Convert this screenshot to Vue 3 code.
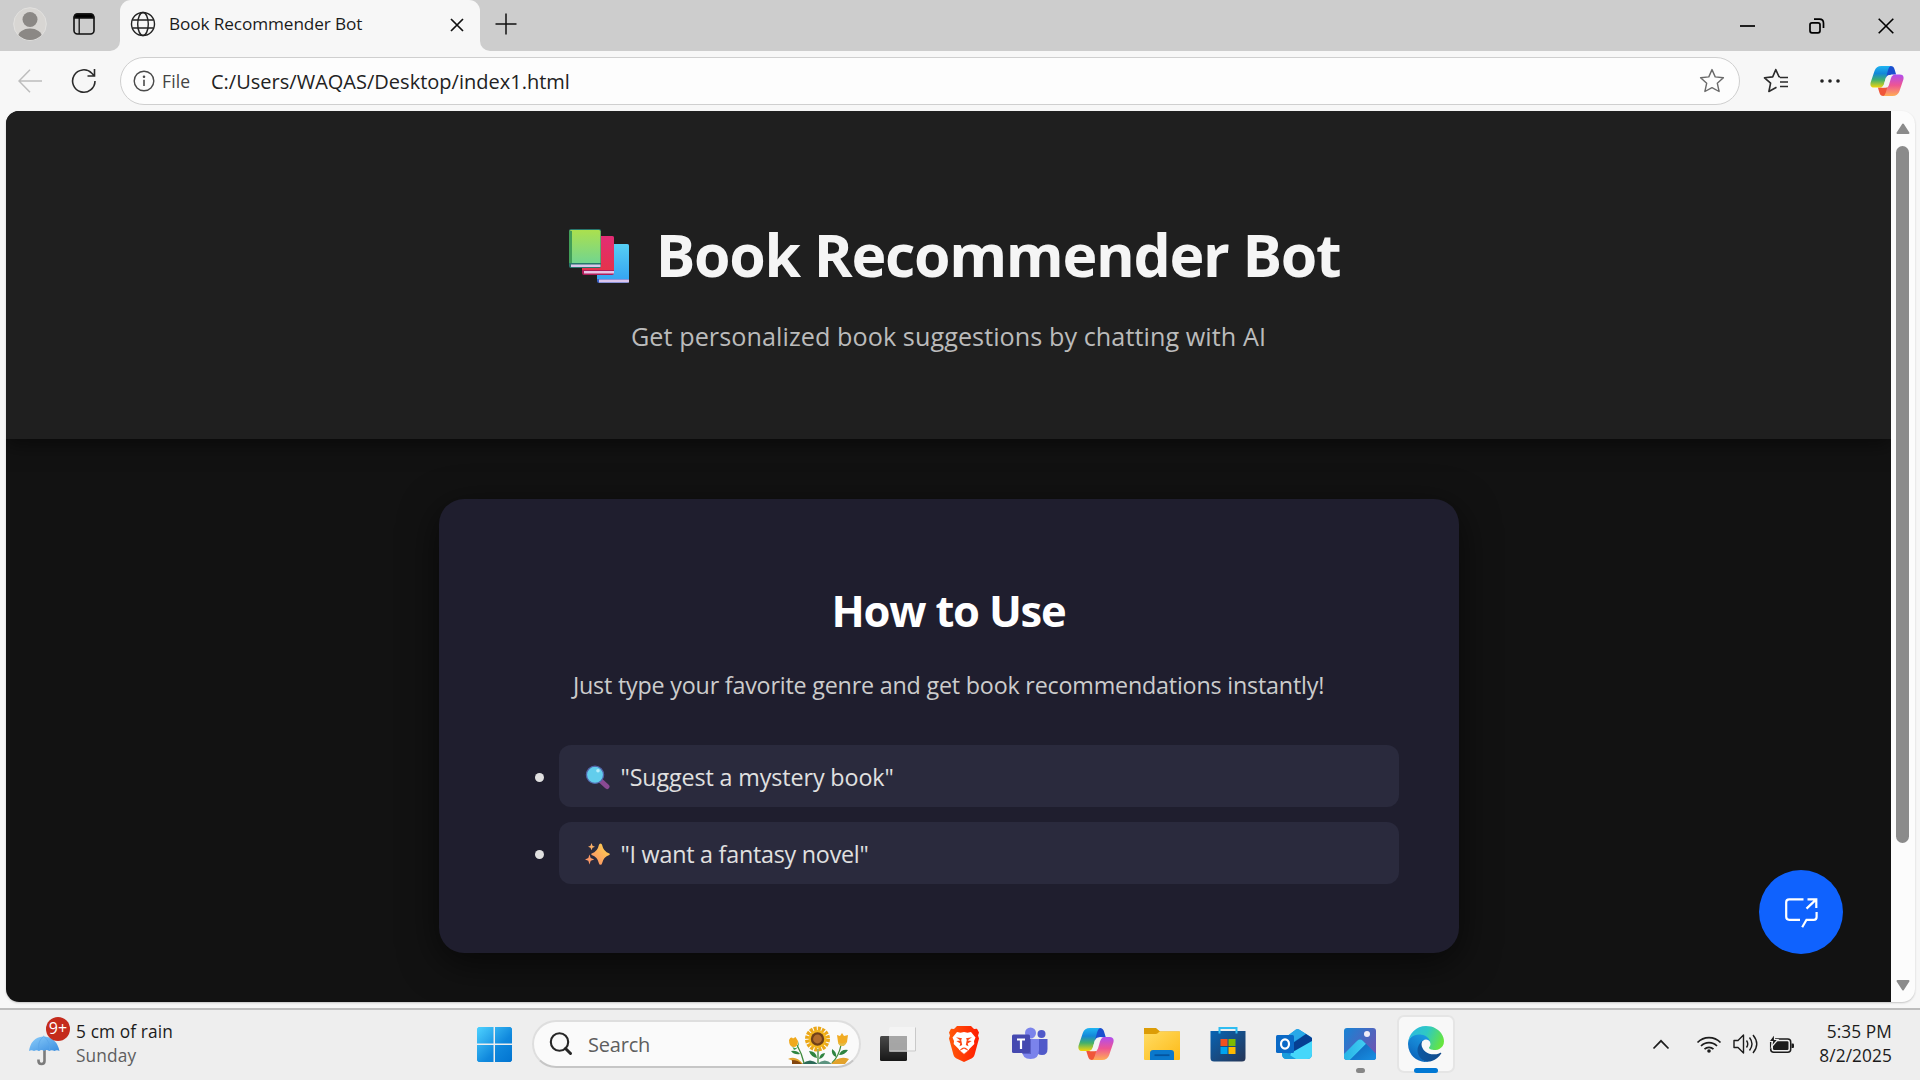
<script setup>
const examples = [
  { icon: 'search', text: '"Suggest a mystery book"' },
  { icon: 'sparkle', text: '"I want a fantasy novel"' },
]
</script>

<template>
  <div class="screen">
    <svg class="defs" width="0" height="0" aria-hidden="true">
      <defs>
        <linearGradient id="cpA" x1="0" y1="0" x2="0" y2="1"><stop offset="0" stop-color="#1fb5f2" /><stop offset=".35" stop-color="#1387d8" /><stop offset=".65" stop-color="#43b06c" /><stop offset="1" stop-color="#f5d60a" /></linearGradient>
        <linearGradient id="cpB" x1="0" y1="1" x2="0" y2="0"><stop offset="0" stop-color="#b04df0" /><stop offset=".5" stop-color="#ee5593" /><stop offset="1" stop-color="#ffae55" /></linearGradient>
        <symbol id="copilot" viewBox="0 0 36 34">
          <path d="M17 1h5q3 0 4 3.500l1.700 5.500h-5q-2.500 0-3.300 3L17 20z" fill="#1a4fcf" />
          <path d="M19 33h-5q-3 0-4-3.500L8.300 24h5q2.500 0 3.300-3L19 14z" fill="#f0563a" />
          <path d="M12 1h10q-2 .8-2.800 4L15 20q-1 4-5 4H4.500Q-.6 24 .6 18.500L4.800 6Q6.500 1 12 1z" fill="url(#cpA)" />
          <path d="M12 1h10q-2 .8-2.800 4L15 20q-1 4-5 4H4.500Q-.6 24 .6 18.500L4.800 6Q6.500 1 12 1z" fill="url(#cpB)" transform="rotate(180 18 17)" />
          <path d="M19.800 10.500h5q-2 .8-2.800 4l-2 7q-.8 2.800-3.500 2.800h-5q2.300-.6 3.200-3.600l2.200-7.200q.8-2.500 2.900-3z" fill="#f3f3f3" />
        </symbol>
      </defs>
    </svg>

    <header class="titlebar">
      <div class="left-tools">
        <svg width="34" height="34" viewBox="0 0 34 34"><defs><clipPath id="av"><circle cx="17" cy="17" r="16" /></clipPath></defs><circle cx="17" cy="17" r="16.300" fill="#d8d6d3" stroke="#e2e1df" /><g clip-path="url(#av)" fill="#8b8885"><circle cx="17" cy="12.500" r="7.500" /><ellipse cx="17" cy="30" rx="12" ry="8.500" /></g></svg>
        <svg width="22" height="22" viewBox="0 0 22 22" fill="none" stroke="#111" stroke-width="1.600"><rect x="1" y="1" width="20" height="20" rx="3.500" /><path d="M1.500 5V4Q1.500 1 4.500 1h13q3 0 3 3v1z" fill="#000" /><path d="M6.200 5v16" stroke-width="1.300" /></svg>
      </div>
      <div class="tab">
        <svg width="26" height="26" viewBox="0 0 26 26" fill="none" stroke="#222" stroke-width="1.400"><circle cx="13" cy="13" r="11.500" /><ellipse cx="13" cy="13" rx="5.300" ry="11.500" /><path d="M2.500 9h21M2.500 17h21" /></svg>
        <span class="tab-title">Book Recommender Bot</span>
        <svg class="tab-close" width="14" height="14" viewBox="0 0 14 14" stroke="#111" stroke-width="1.700"><path d="M1 1l12 12M13 1L1 13" /></svg>
      </div>
      <div class="strip">
        <svg class="plus" width="22" height="22" viewBox="0 0 22 22" stroke="#111" stroke-width="1.500"><path d="M11 .5v21M.5 11h21" /></svg>
        <div class="window-buttons">
          <svg width="16" height="16" viewBox="0 0 16 16" stroke="#000" stroke-width="1.700"><path d="M0 8h15" /></svg>
          <svg width="16" height="16" viewBox="0 0 16 16" fill="none" stroke="#000" stroke-width="1.700"><rect x="1" y="4.800" width="10" height="10" rx="2" /><path d="M5 1.200h5.500q4 0 4 4V10" /></svg>
          <svg width="16" height="16" viewBox="0 0 16 16" stroke="#000" stroke-width="1.600"><path d="M.7.7l14.600 14.600M15.300.7L.7 15.300" /></svg>
        </div>
      </div>
    </header>

    <div class="toolbar">
      <svg class="back" width="24" height="24" viewBox="0 0 24 24" fill="none" stroke="#bdbdbd" stroke-width="1.500"><path d="M12 .8L1 12l11 11.200M1 12h23" /></svg>
      <svg class="reload" width="26" height="26" viewBox="0 0 26 26" fill="none" stroke="#2b2b2b" stroke-width="1.600"><path d="M24 13a11.200 11.200 0 1 1-3.200-7.800L23.500 8M23.500 1v7h-7" /></svg>
      <div class="address">
        <svg width="22" height="22" viewBox="0 0 22 22" fill="none" stroke="#4a4a4a" stroke-width="1.400"><circle cx="11" cy="11" r="9.800" /><path d="M11 9.800V16" stroke-width="1.600" /><circle cx="11" cy="6.800" r=".6" fill="#4a4a4a" /></svg>
        <span class="scheme">File</span>
        <span class="url">C:/Users/WAQAS/Desktop/index1.html</span>
        <svg class="star" width="26" height="26" viewBox="0 0 26 26" fill="none" stroke="#6a6a6a" stroke-width="1.400" stroke-linejoin="round"><path d="M13 1.600l3.200 7.300 8.200.9-6.100 5.400 1.800 8.300L13 19.600l-7.100 3.900 1.800-8.300L1.600 9.800l8.200-.9z" /></svg>
      </div>
      <div class="tools-right">
        <svg width="26" height="26" viewBox="0 0 26 26" fill="none" stroke="#2b2b2b" stroke-width="1.600" stroke-linejoin="round"><path d="M17 8.900l-1-.1L12.800 1.600 9.700 8.900l-8.200.9 6.100 5.400-1.700 8.300 7.600-4.200M17 9.500h8M17 14h8M17 18.500h8" /></svg>
        <svg width="20" height="6" viewBox="0 0 20 6" fill="#222"><circle cx="2" cy="3" r="1.800" /><circle cx="10" cy="3" r="1.800" /><circle cx="18" cy="3" r="1.800" /></svg>
        <svg width="34" height="32"><use href="#copilot" /></svg>
      </div>
    </div>

    <div class="viewport">
      <main class="page">
        <section class="hero">
          <h1>
            <svg class="books" width="62" height="58" viewBox="0 0 62 58"><defs><linearGradient id="bg1" x1="0" y1="0" x2="0" y2="1"><stop offset="0" stop-color="#abe04e" /><stop offset="1" stop-color="#72d58f" /></linearGradient><linearGradient id="bg2" x1="0" y1="0" x2="0" y2="1"><stop offset="0" stop-color="#e22c75" /><stop offset="1" stop-color="#e5334b" /></linearGradient><linearGradient id="bg3" x1="0" y1="0" x2="0" y2="1"><stop offset="0" stop-color="#56cff4" /><stop offset="1" stop-color="#36a5f2" /></linearGradient></defs>
              <rect x="29" y="17" width="32" height="39" rx="2" fill="#3b62c8" /><path d="M33 17h26q2 0 2 2v33H29V19q0-2 4-2z" fill="url(#bg3)" /><path d="M31 52.500h30v3H31z" fill="#dcc6ec" />
              <rect x="14" y="9" width="32" height="39" rx="2" fill="#b01c59" /><path d="M18 9h26q2 0 2 2v32H14V11q0-2 4-2z" fill="url(#bg2)" /><path d="M16 44h30v2.500H16z" fill="#e8c3e4" />
              <rect x="1" y="2" width="32" height="39" rx="2" fill="#28766d" /><path d="M4 3h27q1.500 0 1.500 1.500V36H1V5q0-2 3-2z" fill="url(#bg1)" /><path d="M1 4h3v32H1z" fill="#419e58" /><path d="M3 37.500h29.500v2.500H3z" fill="#dcc6ec" /></svg>
            <span>Book Recommender Bot</span>
          </h1>
          <p>Get personalized book suggestions by chatting with AI</p>
        </section>

        <section class="card">
          <h2>How to Use</h2>
          <p>Just type your favorite genre and get book recommendations instantly!</p>
          <ul>
            <li v-for="e in examples" :key="e.icon" :class="e.icon">
              <svg v-if="e.icon === 'search'" width="25" height="25" viewBox="0 0 25 25"><path d="M16 16l6 5.500" stroke="#8a4a93" stroke-width="5" stroke-linecap="round" /><circle cx="10" cy="9.800" r="8.600" fill="#62cdec" stroke="#5263a8" stroke-width="1.300" /><circle cx="13" cy="5.800" r="1.800" fill="#b5edfb" /></svg>
              <svg v-else width="25" height="25" viewBox="0 0 25 25"><defs><linearGradient id="sp" x1="1" y1="0" x2="0" y2="1"><stop offset="0" stop-color="#ffd94a" /><stop offset="1" stop-color="#f9886c" /></linearGradient></defs><path d="M15.500 1.500q1.300 0 1.600 1.600 1.300 6.500 7.200 8.400 1 .7 0 1.400-5.900 1.900-7.200 8.300-.3 1.600-1.600 1.600t-1.600-1.600Q12.600 14.800 6.700 12.900q-1-.7 0-1.400 5.900-1.900 7.200-8.400.3-1.600 1.600-1.600z" fill="url(#sp)" /><path d="M6.500 1l1 2.700 2.500 1-2.500 1-1 2.600-1-2.600-2.500-1 2.500-1z" fill="#fbb067" /><path d="M4.500 12.500l1.200 3.600 3.500 1.400-3.500 1.300-1.200 3.700-1.200-3.700L0 17.500l3.300-1.400z" fill="#fa9868" /></svg>
              <span>{{ e.text }}</span>
            </li>
          </ul>
        </section>

        <button class="fab" aria-label="Open chat">
          <svg width="84" height="84" viewBox="0 0 84 84" fill="none" stroke="#fff" stroke-width="2.200"><path d="M44.500 29.300H30.200q-3 0-3 3v14.500q0 3 3 3H41M43.200 57.200l4.300-7.400h7.300q2.800 0 2.800-2.800v-5M48.500 29.300h8.800V38M57 29.600l-9.500 9" /></svg>
        </button>
      </main>
      <aside class="scrollbar">
        <svg width="16" height="12" viewBox="0 0 16 12"><path d="M8 1.500l5.500 8.500h-11z" fill="#8b8b8b" stroke="#8b8b8b" stroke-width="2" stroke-linejoin="round" /></svg>
        <i></i>
        <svg width="16" height="12" viewBox="0 0 16 12"><path d="M8 10.500L2.500 2h11z" fill="#8b8b8b" stroke="#8b8b8b" stroke-width="2" stroke-linejoin="round" /></svg>
      </aside>
    </div>

    <footer class="taskbar">
      <div class="weather">
        <svg width="42" height="46" viewBox="0 0 42 46"><defs><linearGradient id="um" x1="0" y1="0" x2="1" y2="1"><stop offset="0" stop-color="#8fd0fb" /><stop offset="1" stop-color="#3a8de0" /></linearGradient></defs><path d="M15.500 29v11q0 3-3 3t-3-3v-1.500" fill="none" stroke="#7b7b7b" stroke-width="2.600" /><path d="M14 15.500q.8-2 1.500 0 12 1 15 14.500-2.500-1.500-5 0-2.800-1.500-5.300 0-2.700-2-5.200 0-2.500-2-5 0-2.500-1.500-5 0-2.500-1.500-5 0Q2 16.500 14 15.500z" fill="url(#um)" /><path d="M14 16q-6 5-4 14M15.500 16q6 5 5 14" fill="none" stroke="#5aa6e9" stroke-width=".8" /></svg>
        <b class="badge">9+</b>
        <div class="two-lines"><div>5 cm of rain</div><div class="muted">Sunday</div></div>
      </div>

      <div class="dock">
        <svg class="start" width="35" height="35" viewBox="0 0 35 35"><defs><linearGradient id="wn" gradientUnits="userSpaceOnUse" x1="0" y1="0" x2="35" y2="35"><stop offset="0" stop-color="#4ed2ff" /><stop offset=".6" stop-color="#1088dd" /><stop offset="1" stop-color="#0274d0" /></linearGradient></defs><path d="M1.500 0h15v16.500H0V1.500zM18 0h15.500L35 1.500v15H18zM0 18h16.500v17h-15L0 33.500zM18 18h17v15.500L33.500 35H18z" fill="url(#wn)" /></svg>
        <div class="search-box">
          <svg width="24" height="24" viewBox="0 0 24 24" fill="none" stroke="#262626"><circle cx="10.500" cy="10" r="8.700" stroke-width="2.100" /><path d="M16.500 16.500l5 5" stroke-width="3" stroke-linecap="round" /></svg>
          <span class="search-text">Search</span>
          <svg class="flowers" width="64" height="40" viewBox="0 0 64 40">
            <g fill="none" stroke="#3f8a3c" stroke-width="1.300"><path d="M10 20q5 9 7 18M31 24v14M54 20q-2 11-9 18" /></g>
            <g fill="#2f8440"><path d="M4 26q6-1 9 3-6 1-9-3zM22 26q7 0 8 7-6-1-8-7zM38 28q-5 0-6 6 5-1 6-6zM45 24q-1 6 4 8 1-5-4-8zM61 25q-7-1-9 5 6 0 9-5z" /></g>
            <path d="M1 34q8-4 15 5H8q-2-4-7-5zM62 34q-10-4-18 5h14z" fill="#e2a22c" /><path d="M5 35q6 0 10 4H5z" fill="#84470f" /><path d="M15 39q8-7 16 0z" fill="#2c6a57" /><path d="M30 39q8-7 15 0z" fill="#5c9480" />
            <path d="M2 15q2-4 4-1.500l2.500-1.500 2.500 4q0 6-4.500 6T2 15z" fill="#efa91e" /><path d="M5 21q2 3 5 1.500l2-6.500q0 8-5 9z" fill="#3f9e51" />
            <path d="M50 10l3 1 2-3 2 3 4-1-1 7q-2 4-5 4t-4-4z" fill="#f1ac24" /><path d="M51 17q4 3 8 0-.5 4-4 4t-4-4z" fill="#e2bd49" />
            <circle cx="30.500" cy="14" r="10" fill="none" stroke="#eba718" stroke-width="5" stroke-dasharray="2.900 1.030" /><circle cx="30.500" cy="14" r="9" fill="#f4b71e" /><circle cx="30.500" cy="14" r="6.700" fill="#70401a" /><circle cx="30.500" cy="14" r="4.400" fill="#b26d2d" />
          </svg>
        </div>

        <div class="apps">
          <div class="app"><svg width="36" height="36" viewBox="0 0 36 36"><defs><linearGradient id="tv" x1="0" y1="0" x2="0" y2="1"><stop offset="0" stop-color="#494949" /><stop offset="1" stop-color="#171717" /></linearGradient></defs><rect x="0" y="10" width="27" height="25" rx="1.500" fill="url(#tv)" /><rect x="9" y="1" width="27" height="24.500" rx="1.500" fill="#f5f5f5" opacity=".85" /><path d="M9 10h18v15.500H9z" fill="#999" opacity=".8" /><path d="M9.500 25h26V1.500" fill="none" stroke="#c9c9c9" /></svg></div>
          <div class="app"><svg width="30" height="36" viewBox="0 0 30 36"><defs><linearGradient id="br"><stop offset="0" stop-color="#ff5a0a" /><stop offset="1" stop-color="#ff1b00" /></linearGradient></defs><path d="M8 0h14l3 3 3-.3 2 3.800-1 3 1 3-4.500 16.500q-.5 2-2.500 3.300L15 36l-8-3.700Q5 31 4.500 29L0 12.500l1-3-1-3 2-3.800L5 3z" fill="url(#br)" /><path d="M8 6l3.500.7L15 6l3.500.7L22 6l4.500 5.500L25 15l.3 3-5 5-.8 1.500-2.500-2.500-2-.5-2 .5-2.500 2.500-.8-1.500-5-5L5 15l-1.500-3.500z" fill="#fff" /><path d="M7 11.300l6 .9-.8 1.800 1 5-2.700 1.200.8-2.700-4-2.500 4.200-.4zM23 11.300l-6 .9.800 1.800-1 5 2.700 1.200-.8-2.700 4-2.500-4.200-.4z" fill="#fb4513" /><path d="M15 22.300l4.500 2.200L15 28.300l-4.500-3.800z" fill="#fff" stroke="#fb4513" stroke-width=".6" /></svg></div>
          <div class="app"><svg width="36" height="34" viewBox="0 0 36 34"><circle cx="18.500" cy="6" r="5.500" fill="#7b83eb" /><circle cx="29.500" cy="7" r="4" fill="#5059c9" /><path d="M24 12h11.500v10q0 6-5.500 6t-6-6z" fill="#5059c9" /><path d="M10 12h17v11q0 9-8.500 9T10 23z" fill="#7b83eb" /><path d="M10 12h9v15h-8.500z" fill="#5a60c7" /><rect y="7.500" width="18" height="18.500" rx="1.500" fill="#4549b0" /><path d="M5 12.500h8M9 12.500v9.500" stroke="#fff" stroke-width="2.200" /></svg></div>
          <div class="app"><svg width="36" height="34"><use href="#copilot" /></svg></div>
          <div class="app"><svg width="36" height="34" viewBox="0 0 36 34"><defs><linearGradient id="fo" x1="0" y1="0" x2="1" y2="1"><stop offset="0" stop-color="#ffdc63" /><stop offset="1" stop-color="#fdba17" /></linearGradient></defs><path d="M0 1h12l4 3.500h19.500q.5 0 .5 1V10H0z" fill="#dc9c06" /><path d="M0 7h11.500q1.500 0 3-1.500l1.500-1h19.500q.5 0 .5 1V32q0 1-1 1H1q-1 0-1-1z" fill="url(#fo)" /><path d="M6 33V26q0-3 3-3h18q3 0 3 3v7z" fill="#0a78cc" /><path d="M10.500 28.200h15" stroke="#04549e" stroke-width="1.800" /></svg></div>
          <div class="app"><svg width="36" height="36" viewBox="0 0 36 36"><defs><linearGradient id="st" x1="0" y1="0" x2="1" y2="1"><stop offset="0" stop-color="#0764b4" /><stop offset="1" stop-color="#263556" /></linearGradient></defs><path d="M.5 5h35v27q0 3.500-3.500 3.500H4Q.5 35.500.5 32z" fill="url(#st)" /><path d="M9.500 7.500V2h17v5.500" fill="none" stroke="#2fbdf1" stroke-width="2" /><path d="M10.500 13h7v7h-7z" fill="#f25022" /><path d="M18.500 13h7v7h-7z" fill="#7fba00" /><path d="M10.500 21h7v7h-7z" fill="#00a4ef" /><path d="M18.500 21h7v7h-7z" fill="#ffb900" /></svg></div>
          <div class="app"><svg width="36" height="32" viewBox="0 0 36 32"><path d="M6 12L20 1.500q1.500-.8 3 0L35 9q1 1 1 2v15q0 5-5 5H11q-5 0-5-5z" fill="#1490df" /><path d="M6 12L20 1.500q1.500-.8 3 0L30 6 14 16z" fill="#28a8e8" /><path d="M14 17l16-11 6 4v5L20 25z" fill="#063f92" /><path d="M15 25l21-12v13q0 5-5 5H13z" fill="#45d7fa" /><path d="M6 22l14 9h-9q-5 0-5-5z" fill="#189ddc" /><rect y="7" width="18" height="18" rx="1.500" fill="#0a69c6" /><ellipse cx="9" cy="16" rx="4" ry="4.600" fill="none" stroke="#fff" stroke-width="2.200" /></svg></div>
          <div class="app"><svg width="32" height="32" viewBox="0 0 32 32"><defs><linearGradient id="ph" x1="0" y1="0" x2="1" y2=".7"><stop offset="0" stop-color="#1684d5" /><stop offset="1" stop-color="#6c55b3" /></linearGradient><linearGradient id="pm"><stop offset="0" stop-color="#27b4e6" /><stop offset="1" stop-color="#41cdf2" /></linearGradient><linearGradient id="pr" x1="0" y1="0" x2="1" y2="1"><stop offset="0" stop-color="#0f63b8" /><stop offset="1" stop-color="#188fe2" /></linearGradient><clipPath id="pc"><rect width="32" height="32" rx="3" /></clipPath></defs><g clip-path="url(#pc)"><path d="M0 0h32v32H0z" fill="url(#ph)" /><path d="M13 13q3-3 6 0l13 13v6H3z" fill="url(#pr)" /><path d="M0 26L13.200 12.800q2.800-2.600 5.600 0L22 16 6 32H0z" fill="url(#pm)" /><path d="M22 16l10 10v6H6z" fill="url(#pr)" /><circle cx="23" cy="6" r="3" fill="#f1edf7" /></g></svg><i class="dot"></i></div>
          <div class="app active"><svg width="36" height="36" viewBox="0 0 256 256"><defs><linearGradient id="e1" x1="0" x2="1"><stop offset="0" stop-color="#0c59a4" /><stop offset="1" stop-color="#114a8b" /></linearGradient><linearGradient id="e2" x1=".7" y1="0" x2=".2" y2="1"><stop offset="0" stop-color="#1b9de2" /><stop offset=".5" stop-color="#1480d0" /><stop offset="1" stop-color="#0a5db4" /></linearGradient><linearGradient id="e3" x1="0" y1=".2" x2="1" y2=".5"><stop offset="0" stop-color="#2bb8e3" /><stop offset=".5" stop-color="#2fc9c3" /><stop offset="1" stop-color="#66e53f" /></linearGradient></defs>
            <path fill="url(#e1)" d="M231 190.500c-3.400 1.800-6.900 3.400-10.500 4.700a101.700 101.700 0 0 1-35.900 6.500c-47.300 0-88.500-32.500-88.500-74.300a31.500 31.500 0 0 1 16.400-27.300c-42.800 1.800-53.800 46.400-53.800 72.500 0 74 68.100 81.400 82.800 81.400 7.900 0 19.800-2.300 27-4.600l1.300-.4a128.300 128.300 0 0 0 66.600-52.800 4 4 0 0 0-5.400-5.700z" />
            <path fill="url(#e2)" d="M105.700 241.400a79.200 79.200 0 0 1-22.700-21.300 80.700 80.700 0 0 1 29.500-120c3.200-1.500 8.500-4.100 15.600-4a32.400 32.400 0 0 1 25.700 13 31.900 31.900 0 0 1 6.300 18.700c0-.2 24.500-79.600-80-79.600-43.900 0-80 41.600-80 78.200a130.200 130.200 0 0 0 12.100 56 128 128 0 0 0 156.400 67 75.500 75.500 0 0 1-62.800-8z" />
            <path fill="url(#e3)" d="M152.300 148.900c-.9 1-3.400 2.500-3.400 5.600 0 2.600 1.700 5.200 4.800 7.300 14.300 10 41.400 8.600 41.500 8.600a59.600 59.600 0 0 0 30.300-8.300 61.400 61.400 0 0 0 30.400-52.900c.3-22.400-8-37.300-11.300-43.900C223.500 23.900 177.700 0 128 0A128 128 0 0 0 0 126.200c.5-36.500 36.800-66 80-66 3.500 0 23.500.3 42 10 16.300 8.600 24.900 18.900 30.800 29.200 6.200 10.700 7.300 24.100 7.300 29.500 0 5.300-2.700 13.300-7.800 20z" /></svg><i class="bar"></i></div>
        </div>
      </div>

      <div class="tray">
        <svg width="18" height="11" viewBox="0 0 18 11" fill="none" stroke="#1c1c1c" stroke-width="1.700"><path d="M1.500 9.500L9 1.800l7.500 7.700" /></svg>
        <svg class="wifi" width="26" height="20" viewBox="0 0 26 20" fill="none" stroke="#1c1c1c" stroke-width="1.700"><path d="M1.500 8.500a16 16 0 0 1 23 0M5 12a11.200 11.200 0 0 1 16 0M8.500 15.200a6.500 6.500 0 0 1 9 0" /><circle cx="13" cy="17" r="1.800" fill="#1c1c1c" stroke="none" /></svg>
        <svg class="speaker" width="25" height="22" viewBox="0 0 25 22" fill="none" stroke="#1c1c1c" stroke-width="1.400"><path d="M1 7.500h4L10.500 2v18L5 14.500H1z" stroke-linejoin="round" /><path d="M13.500 7.500q2.500 3.500 0 7M16.500 4.500q5 6.500 0 13M20 2q7.500 9 0 18" /></svg>
        <svg class="battery" width="26" height="20" viewBox="0 0 26 20"><rect x="1.700" y="5" width="20" height="13.200" rx="3" fill="none" stroke="#1c1c1c" stroke-width="1.500" /><rect x="4" y="7.300" width="15.500" height="8.600" rx="1.200" fill="#1c1c1c" /><path d="M22.500 9.500h1.500q1 0 1 1v2.500q0 1-1 1h-1.500z" fill="#1c1c1c" /><path d="M5.500 0L0 7.500h3.500L2.500 13 9 5.500H5.500z" fill="#1c1c1c" stroke="#eee" stroke-width="1.200" /></svg>
        <div class="clock"><div>5:35 PM</div><div>8/2/2025</div></div>
      </div>
    </footer>
  </div>
</template>

<style>
body { margin: 0; overflow: hidden; }
</style>

<style scoped>
* { box-sizing: border-box; }
.screen { width: 1920px; height: 1080px; display: flex; flex-direction: column; overflow: hidden; background: #f7f7f7; font-family: "Open Sans", "Noto Sans", sans-serif; color: #1b1b1b; }
.screen span { white-space: nowrap; }
.defs { position: absolute; }
svg { display: block; flex: none; }

.titlebar { height: 51px; background: linear-gradient(#cdcdcd 50%, #f7f7f7 50%); display: flex; align-items: center; flex: none; }
.left-tools { width: 120px; height: 51px; background: #cdcdcd; border-bottom-right-radius: 10px; display: flex; align-items: center; gap: 26px; padding: 0 0 3px 13px; }
.tab { width: 360px; height: 51px; background: #f7f7f7; border-radius: 11px 11px 0 0; display: flex; align-items: center; padding: 0 16px 3px 10px; }
.tab-title { font-size: 17.200px; letter-spacing: -.1px; margin: -2px 0 0 13px; flex: 1; }
.tab-close { margin-top: 2px; }
.strip { flex: 1; height: 51px; display: flex; align-items: center; background: #cdcdcd; border-bottom-left-radius: 10px; }
.plus { margin: 0 0 3px 15px; }
.window-buttons { margin-left: auto; display: flex; gap: 53px; padding-right: 26px; }

.toolbar { height: 60px; flex: none; display: flex; align-items: center; padding: 0 16px 0 18px; }
.reload { margin-left: 29px; }
.address { width: 1620px; height: 48px; margin-left: 23px; border: 1.500px solid #cfcfcf; border-radius: 24px; background: #fdfdfd; display: flex; align-items: center; padding: 0 14px 0 12px; }
.scheme { width: 49px; margin-left: 7px; font-size: 17.500px; letter-spacing: .15px; color: #444; }
.url { font-size: 20px; letter-spacing: .01px; color: #222; flex: 1; }
.tools-right { margin-left: auto; display: flex; align-items: center; justify-content: space-between; width: 141px; }

.viewport { width: 1909px; height: 891px; margin-left: 6px; flex: none; display: flex; border-radius: 13px; overflow: hidden; box-shadow: 0 1px 2px #c4c4c4; background: #fcfcfc; }
.page { position: relative; width: 1885px; height: 891px; background: #121212; overflow: hidden; text-align: center; }
.hero { position: relative; height: 328px; padding-top: 103px; background: #1f1f1f; box-shadow: 0 5px 19px rgba(0, 0, 0, .5); }
h1, h2, p, ul { margin: 0; }
h1 { height: 80px; display: flex; align-items: center; justify-content: center; gap: 26px; padding-left: 11px; font-size: 59px; line-height: 80px; letter-spacing: -1.320px; color: #f5f5f5; }
.books { margin-top: 4px; }
.hero p { margin-top: 22px; font-size: 25.200px; line-height: 40px; letter-spacing: .06px; color: #bbb; }
.card { position: relative; width: 1020px; height: 454px; margin: 60px auto 0; padding: 82px 60px 0; border-radius: 25px; background: #1f1e2e; box-shadow: 0 10px 38px rgba(0, 0, 0, .6); }
h2 { font-size: 43.500px; line-height: 60px; letter-spacing: -1.200px; color: #fff; }
.card p { margin-top: 24px; font-size: 23.300px; line-height: 40px; letter-spacing: -.2px; color: #ccc; }
ul { list-style: none; margin-top: 40px; padding: 0 0 0 60px; display: grid; gap: 15px; }
li { position: relative; height: 62px; padding-left: 26px; display: flex; align-items: center; gap: 11px; border-radius: 12px; background: #2a2a3d; font-size: 23.300px; line-height: 30px; letter-spacing: -.120px; color: #e0e0e0; }
li.sparkle { letter-spacing: -.240px; }
li span { padding-top: 2px; }
li svg { margin-top: 2px; }
li::before { content: ""; position: absolute; left: -24px; top: 28px; width: 9px; height: 9px; border-radius: 50%; background: #e0e0e0; }
.fab { position: absolute; right: 48px; bottom: 48px; width: 84px; height: 84px; padding: 0; border: 0; border-radius: 50%; background: #0f62fe; }
.scrollbar { width: 23px; display: flex; flex-direction: column; align-items: center; padding: 12px 0 11px; }
.scrollbar i { width: 13px; height: 697px; margin: 11px 0 auto; border-radius: 7px; background: #8b8b8b; }

.taskbar { height: 72px; margin-top: 6px; flex: none; display: flex; align-items: center; padding-bottom: 2px; border-top: 2px solid #bdbdbd; background: #eee; }
.weather { position: relative; width: 477px; height: 70px; display: flex; align-items: center; padding-left: 29px; }
.badge { position: absolute; left: 46px; top: 8px; width: 24px; height: 24px; border-radius: 50%; background: #c42b1c; color: #fff; font-size: 16px; font-weight: 400; line-height: 23px; text-align: center; }
.two-lines { margin-left: 5px; font-size: 17.300px; line-height: 24px; letter-spacing: .130px; }
.muted { color: #5e5e5e; }
.dock { display: flex; align-items: center; }
.search-box { width: 329px; height: 48px; margin-left: 20px; display: flex; align-items: center; padding: 0 8px 0 15px; border: 2px solid #dedede; border-bottom-color: #c6c6c6; border-radius: 24px; background: #fafafa; }
.search-text { flex: 1; margin-left: 15px; font-size: 20px; letter-spacing: -.200px; color: #5e5e5e; }
.flowers { margin-top: 1px; }
.apps { display: flex; margin-left: 4px; }
.app { position: relative; width: 66px; height: 58px; display: flex; align-items: center; justify-content: center; }
.app.active { width: 58px; margin-left: 4px; border: 2px solid #e5e5e5; border-radius: 7px; background: #f8f8f8; }
.dot, .bar { position: absolute; bottom: 0; left: 50%; width: 9px; height: 5px; margin-left: -4.500px; border-radius: 3px; background: #868686; }
.bar { bottom: -2px; width: 24px; margin-left: -12px; background: #0078d4; }
.tray { margin-left: auto; display: flex; align-items: center; padding-right: 28px; }
.wifi { margin-left: 26px; }
.speaker { margin-left: 11px; }
.battery { margin-left: 11px; }
.clock { width: 97px; text-align: right; font-size: 17.300px; line-height: 24px; letter-spacing: .100px; }
</style>
